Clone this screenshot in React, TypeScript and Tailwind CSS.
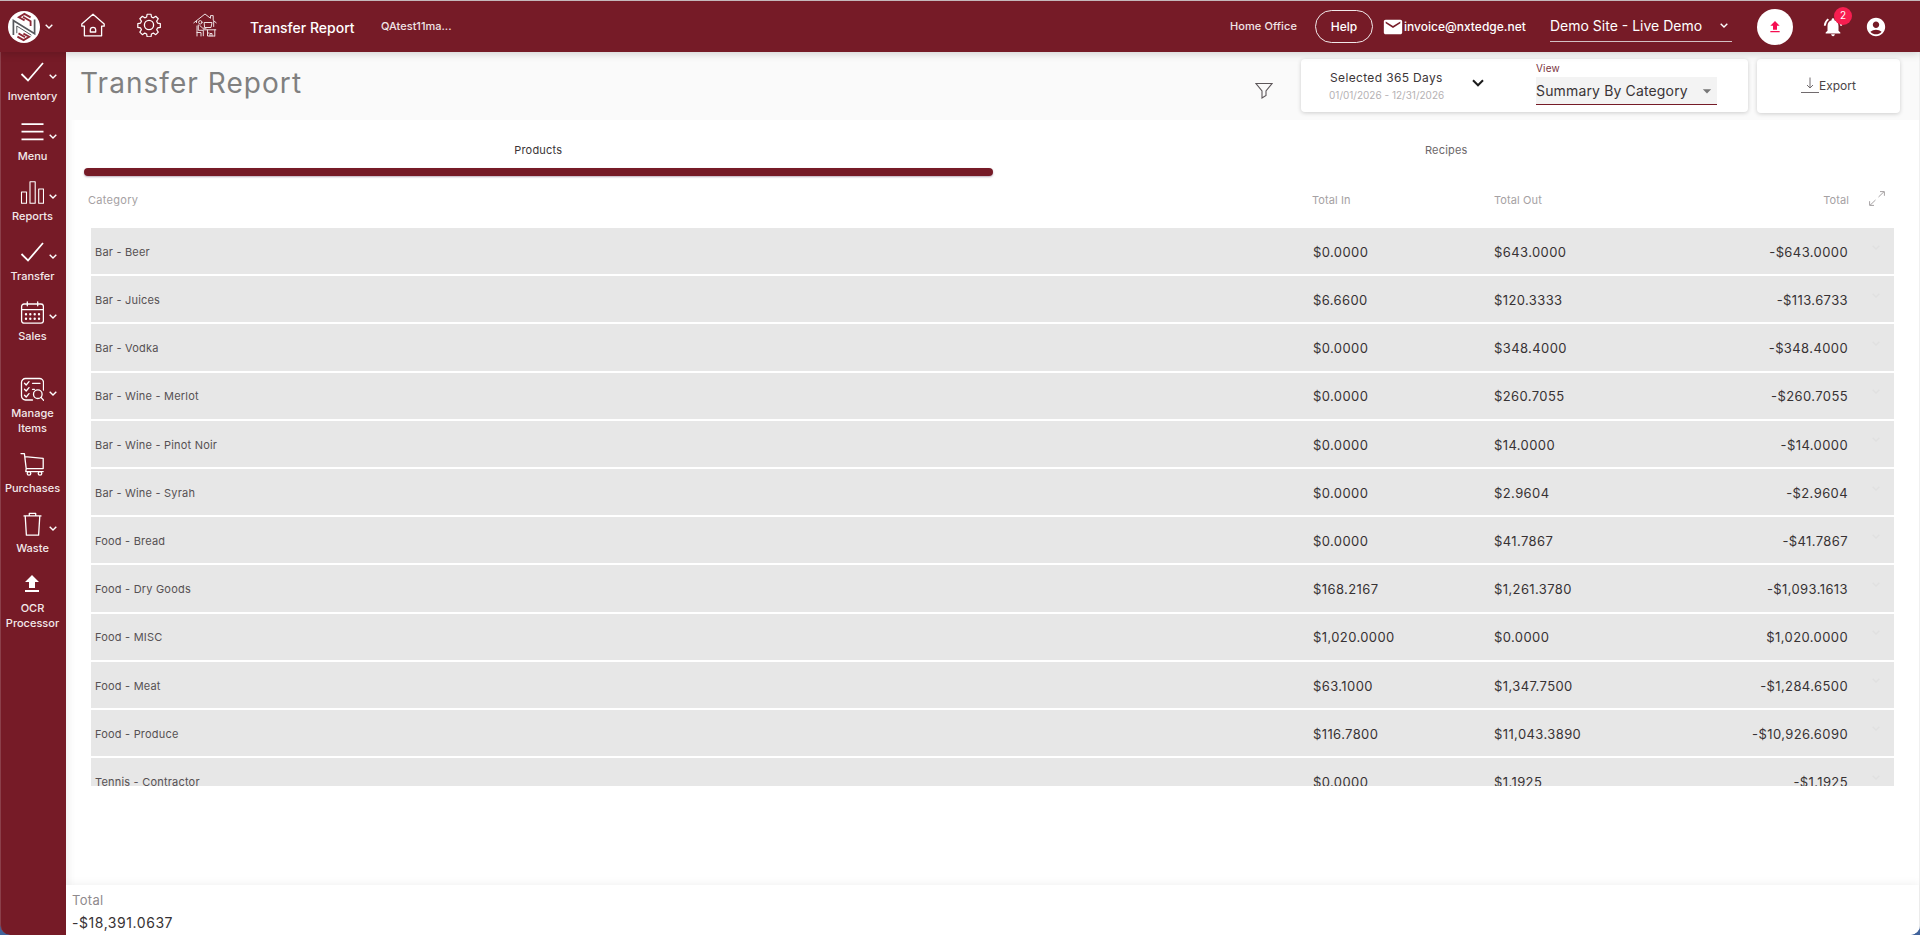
import type { ReactNode } from "react";
import { MdAccountCircle, MdArrowDropDown, MdEmail, MdNotificationsActive, MdUpload } from "react-icons/md";

type Row = { category: string; totalIn: string; totalOut: string; total: string };

const rows: Row[] = [
  { category: "Bar - Beer", totalIn: "$0.0000", totalOut: "$643.0000", total: "-$643.0000" },
  { category: "Bar - Juices", totalIn: "$6.6600", totalOut: "$120.3333", total: "-$113.6733" },
  { category: "Bar - Vodka", totalIn: "$0.0000", totalOut: "$348.4000", total: "-$348.4000" },
  { category: "Bar - Wine - Merlot", totalIn: "$0.0000", totalOut: "$260.7055", total: "-$260.7055" },
  { category: "Bar - Wine - Pinot Noir", totalIn: "$0.0000", totalOut: "$14.0000", total: "-$14.0000" },
  { category: "Bar - Wine - Syrah", totalIn: "$0.0000", totalOut: "$2.9604", total: "-$2.9604" },
  { category: "Food - Bread", totalIn: "$0.0000", totalOut: "$41.7867", total: "-$41.7867" },
  { category: "Food - Dry Goods", totalIn: "$168.2167", totalOut: "$1,261.3780", total: "-$1,093.1613" },
  { category: "Food - MISC", totalIn: "$1,020.0000", totalOut: "$0.0000", total: "$1,020.0000" },
  { category: "Food - Meat", totalIn: "$63.1000", totalOut: "$1,347.7500", total: "-$1,284.6500" },
  { category: "Food - Produce", totalIn: "$116.7800", totalOut: "$11,043.3890", total: "-$10,926.6090" },
  { category: "Tennis - Contractor", totalIn: "$0.0000", totalOut: "$1.1925", total: "-$1.1925" },
];

function LineIcon({ children, className = "size-6" }: { children: ReactNode; className?: string }) {
  return (
    <svg
      viewBox="0 0 24 24"
      fill="none"
      stroke="currentColor"
      strokeWidth="1.3"
      strokeLinecap="round"
      strokeLinejoin="round"
      className={className}
    >
      {children}
    </svg>
  );
}

function Chevron({ className = "h-[5px] w-2" }: { className?: string }) {
  return (
    <svg viewBox="0 0 8 5" fill="none" stroke="currentColor" strokeWidth="1.4" className={className}>
      <path d="M0.7 0.7 4 4 7.3 0.7" />
    </svg>
  );
}

function Logo() {
  return (
    <svg viewBox="0 0 32 32" fill="none" className="size-8">
      <circle cx="16" cy="16" r="16" fill="#fff" />
      <path d="M5.400 24V9.600L26.600 22.800V8.400" stroke="#56585c" strokeWidth="1.700" />
      <path d="M8.800 22.200V15L23.400 24.200" stroke="#56585c" strokeWidth="1" />
      <path d="M22.600 6.400 16.400 2.900 10.800 6.300 16.600 9.400M15 5.800 22.600 10.200V15" stroke="#8c2835" strokeWidth="1.800" />
      <path d="M9.400 25.600 15.600 29.100 21.200 25.700 15.400 22.600M17 26.200 10.500 22.400" stroke="#8c2835" strokeWidth="1.800" />
    </svg>
  );
}

const CheckIcon = () => (
  <LineIcon>
    <path d="M1.5 14 8 20.5 23 3" strokeWidth="1.8" strokeLinecap="butt" strokeLinejoin="miter" />
  </LineIcon>
);

const MenuIcon = () => (
  <LineIcon>
    <path d="M1.5 4.2h22M1.5 11.7h22M1.5 19.3h22" strokeWidth="1.8" strokeLinecap="butt" />
  </LineIcon>
);

const BarsIcon = () => (
  <LineIcon>
    <path d="M1.5 12h5v11.3h-5zM10 1.7h5.2v21.6H10zM18.7 9h4.8v14.3h-4.8z" strokeWidth="1.1" />
  </LineIcon>
);

const CalendarIcon = () => (
  <LineIcon>
    <rect x="1.6" y="4" width="21.8" height="19.2" rx="2.4" />
    <path d="M1.6 9.6h21.8M7.3 1.8v4M17.7 1.8v4" />
    <path d="M6 14.3h.01M10.3 14.3h.01M14.7 14.3h.01M19 14.3h.01M6 18.8h.01M10.3 18.8h.01M14.7 18.8h.01M19 18.8h.01" strokeWidth="2.4" />
  </LineIcon>
);

const ManageIcon = () => (
  <LineIcon>
    <path d="M12.5 23H5.5a4 4 0 0 1-4-4V5.5a4 4 0 0 1 4-4h14a4 4 0 0 1 4 4v7.5" />
    <path d="M4.5 6.2 6.2 8 9 4.6M4.5 12.2 6.2 14 9 10.6M4.5 18.2 6.2 20 9 16.6M12.5 6.3h7.5M12.5 12.3h2" />
    <circle cx="17.8" cy="17.2" r="4.3" />
    <path d="m21 20.4 2.6 3" />
  </LineIcon>
);

const CartIcon = () => (
  <LineIcon>
    <path d="M1 1.6h3.4l1.8 15h17V6.3L4.9 4.6M6.2 16.6l-.4 3h17.4" />
    <circle cx="9" cy="21.4" r="1.8" />
    <circle cx="20" cy="21.4" r="1.8" />
  </LineIcon>
);

const TrashIcon = () => (
  <LineIcon>
    <path d="M4 3.9h17M5.2 3.9l1.2 19.3h12.2l1.2-19.3M9.3 3.6V1.4h6.4v2.2" />
  </LineIcon>
);

type NavEntry = { lines: string[]; icon: ReactNode; menu?: boolean; className?: string };

const nav: NavEntry[] = [
  { lines: ["Inventory"], icon: <CheckIcon />, menu: true },
  { lines: ["Menu"], icon: <MenuIcon />, menu: true },
  { lines: ["Reports"], icon: <BarsIcon />, menu: true },
  { lines: ["Transfer"], icon: <CheckIcon />, menu: true },
  { lines: ["Sales"], icon: <CalendarIcon />, menu: true, className: "mb-[17px]" },
  { lines: ["Manage", "Items"], icon: <ManageIcon />, menu: true },
  { lines: ["Purchases"], icon: <CartIcon /> },
  { lines: ["Waste"], icon: <TrashIcon />, menu: true },
  { lines: ["OCR", "Processor"], icon: <MdUpload className="size-6" /> },
];

function Sidebar() {
  return (
    <aside className="flex w-[66px] shrink-0 flex-col rounded-bl-[10px] border-l border-[#8b3f4a] bg-[#761b27] pr-0.5 pt-2 text-white">
      {nav.map((item) => (
        <a key={item.lines[0]} className={`flex flex-col items-center pb-4 ${item.className ?? ""}`}>
          <span className="grid w-full grid-cols-[19px_24px_1fr] items-center">
            <span />
            {item.icon}
            {item.menu && <Chevron className="ml-[5px] mt-2 h-[5px] w-2" />}
          </span>
          <span className="mt-[5px] text-center text-[11px] font-medium leading-[15px] text-[#f3e9ea]">
            {item.lines.map((line) => (
              <span key={line} className="block">
                {line}
              </span>
            ))}
          </span>
        </a>
      ))}
    </aside>
  );
}

function Header() {
  return (
    <header className="relative z-10 flex h-[52px] shrink-0 items-center border-t border-[#c4b8bb] bg-[#761b27] pl-2 text-white shadow-[0_2px_8px_rgba(0,0,0,0.16)]">
      <Logo />
      <Chevron className="ml-[5px] h-[5px] w-2" />
      <div className="ml-7 flex gap-8 pb-[3px]">
        <LineIcon>
          <path d="M12 1.2 23.2 11v2.2h-2.6v9.6H3.4v-9.6H.8V11z" />
          <path d="M9.3 19v-2a2.7 2.7 0 0 1 5.4 0v2z" />
        </LineIcon>
        <LineIcon>
          <circle cx="12" cy="12" r="4.6" />
          <path
            d="M9.9 1h4.2l.5 3 2 .9 2.6-1.7 2.7 2.7-1.7 2.6.9 2 3 .5v4.2l-3 .5-.9 2 1.7 2.6-2.7 2.7-2.6-1.7-2 .9-.5 3H9.9l-.5-3-2-.9-2.6 1.7-2.7-2.7 1.7-2.6-.9-2-3-.5V11l3-.5.9-2-1.7-2.6 2.7-2.7 2.6 1.7 2-.9z"
            transform="translate(.9 .3) scale(.93)"
          />
        </LineIcon>
        <LineIcon>
          <g strokeWidth="1" stroke="#ecdfe1">
            <path d="M.8 9.8 12 1l5.5 4.300V2.6h2.7v4.700l3 2.500M3.5 8v1.5M20.700 8.500v5" />
            <circle cx="7.3" cy="9.3" r="1.7" />
            <path d="M5.3 12v5.3h5v5.500M4 13v10M4 19.500h4v3.500M6.800 12.500l3 2.700h3.200M11.500 9.500h7.500l-1 5h-6zM10.500 16.800h12.300M21.800 17v6M14.500 17v6h7M14.500 20h1.500M17 23v-2.500h2V23" />
          </g>
        </LineIcon>
      </div>
      <span className="ml-[33px] w-[131px] pt-0.5 text-sm font-medium">Transfer Report</span>
      <span className="text-[11px] font-medium text-[#f0e4e6]">QAtest11ma...</span>

      <span className="ml-auto text-[11px] font-medium tracking-[0.1px] text-[#f0e4e6]">Home Office</span>
      <button className="ml-[18px] h-[33px] w-[58px] rounded-full border border-white/90 text-xs font-medium">Help</button>
      <MdEmail className="ml-[9px] size-[22px]" />
      <span className="w-[146px] text-xs font-medium">invoice@nxtedge.net</span>
      <div className="mt-[3px] flex h-[28px] w-[182px] items-center justify-between border-b border-[#d3c0c3] pb-1 pr-1">
        <span className="text-sm">Demo Site - Live Demo</span>
        <Chevron className="h-[5px] w-2" />
      </div>
      <button className="ml-[25px] grid size-9 place-items-center rounded-full bg-white text-[#f50f52]">
        <MdUpload className="size-4" />
      </button>
      <div className="relative ml-[29px]">
        <MdNotificationsActive className="size-[22px]" />
        <span className="absolute -top-[9px] left-[12px] grid size-[18px] place-items-center rounded-full bg-[#f81e50] text-[10px]">
          2
        </span>
      </div>
      <MdAccountCircle className="ml-[21px] mr-[33px] size-[22px]" />
    </header>
  );
}

function Toolbar() {
  return (
    <div className="flex h-[68px] shrink-0 items-start bg-[#fafafa] pl-[14px] pr-[19px]">
      <h1 className="mt-2.5 text-[28px] leading-[42px] tracking-[1.05px] text-[#808080]">Transfer Report</h1>
      <svg viewBox="0 0 18 17" fill="none" stroke="#5c5659" strokeWidth="1.1" className="ml-auto mr-7 mt-[30px] h-[17px] w-[18px]">
        <path d="M1 1.5h16L11 9v4.500L7 16V9z" />
      </svg>
      <div className="mt-[7px] flex h-[53px] w-[447px] rounded bg-white pl-7 shadow-[0_1px_4px_rgba(0,0,0,0.18)]">
        <div className="w-[143px] pt-[11px]">
          <p className="pl-px text-xs leading-[15px] tracking-[0.35px] text-[#3c3638]">Selected 365 Days</p>
          <p className="mt-[3px] text-[10px] leading-[14px] text-[#b5b1b3]">01/01/2026 - 12/31/2026</p>
        </div>
        <svg viewBox="0 0 12 8" fill="none" stroke="#1c1c1c" strokeWidth="2" className="mt-[20px] h-2 w-3">
          <path d="M1 1.300 6 6.300l5-5" />
        </svg>
        <div className="ml-[52px] w-[181px]">
          <p className="pt-px text-[10px] leading-4 tracking-[0.2px] text-[#7a3440]">View</p>
          <div className="mt-px flex h-7 items-center justify-between border-b border-[#761b27] bg-[#f3f3f3]">
            <span className="pt-px text-sm tracking-[0.15px] text-[#3a3436]">Summary By Category</span>
            <MdArrowDropDown className="size-5 text-[#777]" />
          </div>
        </div>
      </div>
      <button className="ml-[9px] mt-[7px] flex h-[54px] w-[143px] items-start rounded bg-white pl-[44px] pt-[18px] text-[#4a4447] shadow-[0_1px_4px_rgba(0,0,0,0.18)]">
        <svg viewBox="0 0 18 16" fill="none" stroke="#716b6e" className="h-4 w-[18px]">
          <path d="M9 .5v10.500M6 8l3 3 3-3M0 15.500h18" />
        </svg>
        <span className="text-[12px] leading-[17px]">Export</span>
      </button>
    </div>
  );
}

function Tabs() {
  return (
    <div className="ml-[18px] mr-[19px] flex h-[56px] text-[11px] leading-[15px] tracking-[0.2px]">
      <div className="flex w-[909px] flex-col items-center justify-between pt-[23px] text-[#3a3436]">
        Products
        <span className="h-2 w-full rounded bg-[#761b27] shadow-[0_1px_2px_rgba(60,20,60,0.35)]" />
      </div>
      <div className="w-[908px] pt-[23px] text-center text-[#6c6769]">Recipes</div>
    </div>
  );
}

function ReportTable() {
  return (
    <div className="flex flex-col">
      <div className="flex h-[52px] items-start pl-[22px] pt-4 text-[11px] leading-4 tracking-[0.1px] text-[#a5a1a3]">
        <span className="w-[1224px] tracking-[0.3px]">Category</span>
        <span className="w-[182px]">Total In</span>
        <span className="w-[182px]">Total Out</span>
        <span className="w-[173px] text-right">Total</span>
        <svg viewBox="0 0 16 15" fill="none" stroke="#a5a1a3" className="ml-[20px] -mt-px h-[15px] w-4">
          <path d="M9.500 6 15 .7M11 .6h4.400v4.200M6.500 9 1 14.300M.6 10.200v4.200H5" />
        </svg>
      </div>
      <div className="ml-[25px] h-[558px] w-[1803px] overflow-hidden">
        {rows.map((row) => (
          <div key={row.category} className="mb-[2px] flex h-[46.2px] items-center bg-[#e7e7e7] pl-1 text-[13px] tracking-[0.4px] text-[#373234]">
            <span className="w-[1218px] pt-0.5 text-[11px] tracking-[0.2px] text-[#565153]">{row.category}</span>
            <span className="w-[181px] pt-[3px]">{row.totalIn}</span>
            <span className="w-[181px] pt-[3px]">{row.totalOut}</span>
            <span className="w-[173px] pt-[3px] text-right">{row.total}</span>
            <Chevron className="mb-2 ml-6 h-[5px] w-2 text-[#e0e0e0]" />
          </div>
        ))}
      </div>
    </div>
  );
}

export default function App() {
  return (
    <div className="h-[935px] w-[1920px] bg-[#41639b] font-['Inter',sans-serif]">
      <div className="flex h-full flex-col overflow-hidden rounded-b-[10px]">
        <Header />
        <div className="flex min-h-0 flex-1">
          <Sidebar />
          <main className="flex min-w-0 flex-1 flex-col border-r border-[#f0f0f0] bg-white shadow-[inset_8px_0_8px_-6px_rgba(0,0,0,0.08)]">
            <Toolbar />
            <Tabs />
            <ReportTable />
            <footer className="mt-auto h-[50px] bg-white pl-[6px] pt-[7px] shadow-[0_-2px_8px_rgba(0,0,0,0.05)]">
              <p className="text-[13px] leading-4 tracking-[0.3px] text-[#8f8a8d]">Total</p>
              <p className="mt-[7px] text-sm leading-4 tracking-[0.55px] text-[#373234]">-$18,391.0637</p>
            </footer>
          </main>
        </div>
      </div>
    </div>
  );
}
